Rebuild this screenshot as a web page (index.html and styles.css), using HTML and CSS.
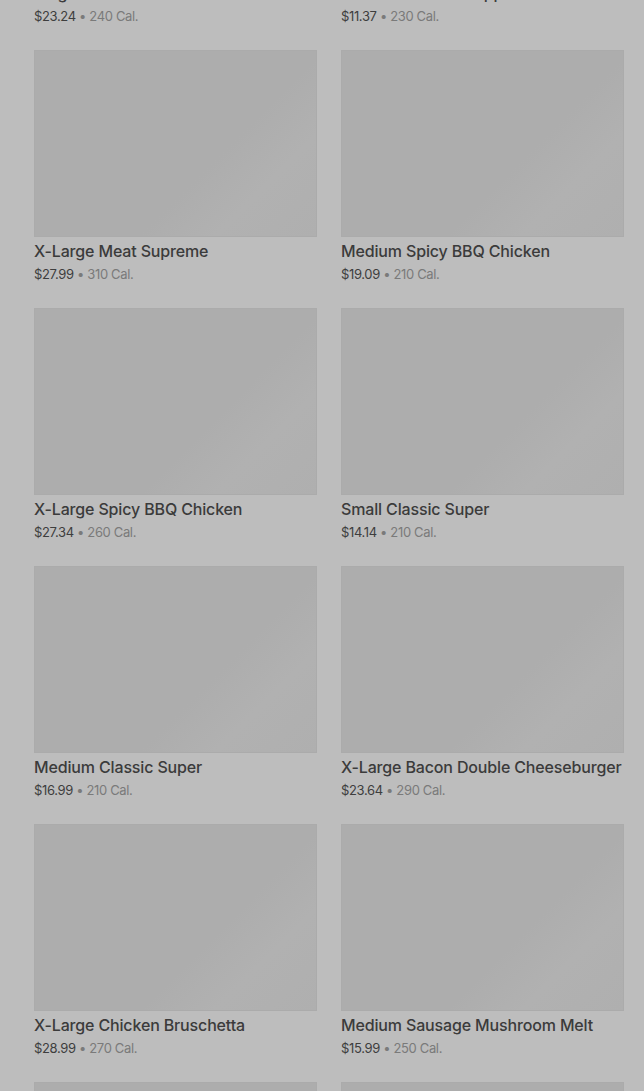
FILE: index.html
```html
<!DOCTYPE html>
<html lang="en">
<head>
  <meta charset="UTF-8">
  <meta name="viewport" content="width=device-width, initial-scale=1.0">
  <title>Menu</title>
  <link rel="stylesheet" href="styles.css">
</head>
<body>

<div class="menu-grid">
  <div class="item">
    <div class="thumb"></div>
    <div class="name">Large Chicken Bruschetta</div>
    <div class="meta"><span class="price">$23.24</span> • 240 Cal.</div>
  </div>
  <div class="item">
    <div class="thumb"></div>
    <div class="name">Medium Classic Pepperoni</div>
    <div class="meta"><span class="price">$11.37</span> • 230 Cal.</div>
  </div>

  <div class="item">
    <div class="thumb"></div>
    <div class="name">X-Large Meat Supreme</div>
    <div class="meta"><span class="price">$27.99</span> • 310 Cal.</div>
  </div>
  <div class="item">
    <div class="thumb"></div>
    <div class="name">Medium Spicy BBQ Chicken</div>
    <div class="meta"><span class="price">$19.09</span> • 210 Cal.</div>
  </div>

  <div class="item">
    <div class="thumb"></div>
    <div class="name">X-Large Spicy BBQ Chicken</div>
    <div class="meta"><span class="price">$27.34</span> • 260 Cal.</div>
  </div>
  <div class="item">
    <div class="thumb"></div>
    <div class="name">Small Classic Super</div>
    <div class="meta"><span class="price">$14.14</span> • 210 Cal.</div>
  </div>

  <div class="item">
    <div class="thumb"></div>
    <div class="name">Medium Classic Super</div>
    <div class="meta"><span class="price">$16.99</span> • 210 Cal.</div>
  </div>
  <div class="item">
    <div class="thumb"></div>
    <div class="name">X-Large Bacon Double Cheeseburger</div>
    <div class="meta"><span class="price">$23.64</span> • 290 Cal.</div>
  </div>

  <div class="item">
    <div class="thumb"></div>
    <div class="name">X-Large Chicken Bruschetta</div>
    <div class="meta"><span class="price">$28.99</span> • 270 Cal.</div>
  </div>
  <div class="item">
    <div class="thumb"></div>
    <div class="name">Medium Sausage Mushroom Melt</div>
    <div class="meta"><span class="price">$15.99</span> • 250 Cal.</div>
  </div>

  <div class="item">
    <div class="thumb"></div>
  </div>
  <div class="item">
    <div class="thumb"></div>
  </div>
</div>

</body>
</html>
```

FILE: styles.css
```css
html, body {
  height: 100%;
}

body {
  margin: 0;
  overflow: hidden;
  background: #bdbdbd;
  font-family: 'Inter', 'Roboto', sans-serif;
  color: #3a3a3a;
}

.menu-grid {
  display: grid;
  grid-template-columns: 283px 283px;
  column-gap: 24px;
  row-gap: 25px;
  padding-left: 34px;
  margin-top: -208px;
}

.thumb {
  height: 187px;
  background: linear-gradient(135deg, #adadad 0%, #adadad 62%, #b1b1b1 78%, #afafaf 100%);
  box-shadow: inset 0 0 0 1px #ababab;
}

.name {
  margin-top: 4px;
  font-size: 16px;
  font-weight: 500;
  line-height: 20px;
  letter-spacing: -0.15px;
  color: #3b3b3b;
  white-space: nowrap;
}

.meta {
  margin-top: 4px;
  font-size: 13px;
  line-height: 18px;
  color: #7a7a7a;
  letter-spacing: -0.35px;
}

.meta .price {
  color: #3e3e3e;
}
```
